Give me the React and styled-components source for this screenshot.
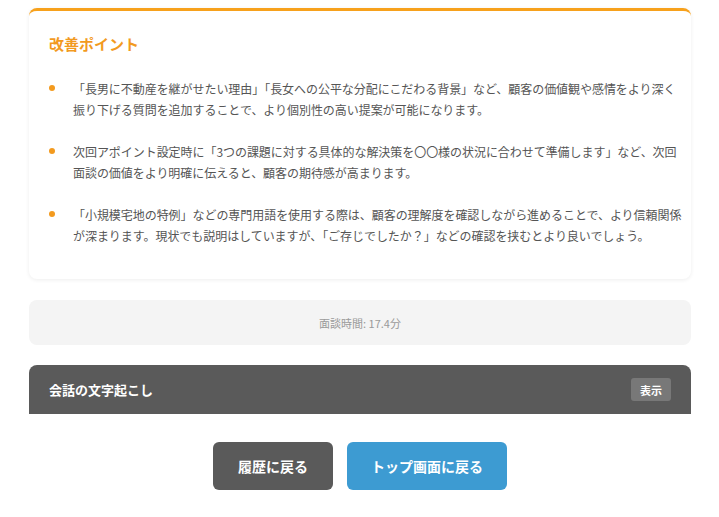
import React from 'react';
import styled, { createGlobalStyle } from 'styled-components';

const GlobalStyle = createGlobalStyle`
  html, body {
    margin: 0;
    padding: 0;
    background: #ffffff;
  }
  body {
    font-family: "Noto Sans CJK JP", "Noto Sans", sans-serif;
  }
`;

const Page = styled.div`
  padding: 8px 28px 28px 29px;
  display: flex;
  flex-direction: column;
`;

const Card = styled.section`
  background: #fff;
  border-top: 3px solid #f7a11c;
  border-radius: 8px;
  box-shadow: 0 1px 4px rgba(0, 0, 0, 0.07);
  padding: 22px 14px 33px 20px;
`;

const CardTitle = styled.h2`
  margin: 0;
  font-size: 15px;
  line-height: 22px;
  font-weight: 700;
  color: #f29a1f;
`;

const PointList = styled.ul`
  list-style: none;
  margin: 23px 0 0;
  padding: 0;
  display: flex;
  flex-direction: column;
  gap: 21px;
`;

const Point = styled.li`
  position: relative;
  padding-left: 24px;
  font-size: 12px;
  line-height: 21px;
  color: #555;
  white-space: nowrap;
  letter-spacing: -0.05px;

  &::before {
    content: '';
    position: absolute;
    left: 0;
    top: 7px;
    width: 6px;
    height: 6px;
    border-radius: 50%;
    background: #f39a1e;
  }
`;

const Line = styled.span`
  display: block;
`;

const TimeBox = styled.div`
  margin-top: 21px;
  height: 45px;
  display: flex;
  align-items: center;
  justify-content: center;
  background: #f4f4f4;
  border-radius: 8px;
  font-size: 11px;
  color: #9a9a9a;
`;

const TranscriptHeader = styled.div`
  margin-top: 20px;
  height: 49px;
  display: flex;
  align-items: center;
  justify-content: space-between;
  padding: 0 20px;
  background: #5a5a5a;
  border-radius: 8px 8px 0 0;
`;

const TranscriptTitle = styled.h3`
  margin: 0;
  font-size: 13px;
  font-weight: 700;
  color: #fff;
`;

const ToggleButton = styled.button`
  width: 40px;
  height: 23px;
  border: none;
  border-radius: 3px;
  background: #787878;
  color: #fff;
  font-family: inherit;
  font-size: 11px;
  font-weight: 700;
  padding: 0;
`;

const Actions = styled.div`
  margin-top: 28px;
  display: flex;
  justify-content: center;
  gap: 14px;
`;

const ActionButton = styled.button`
  width: ${props => props.width}px;
  height: 48px;
  border: none;
  border-radius: 6px;
  background: ${props => (props.primary ? '#3d9bd2' : '#5a5a5a')};
  color: #fff;
  font-family: inherit;
  font-size: 14px;
  font-weight: 700;
`;

const points = [
  [
    '「長男に不動産を継がせたい理由」「長女への公平な分配にこだわる背景」など、顧客の価値観や感情をより深く',
    '振り下げる質問を追加することで、より個別性の高い提案が可能になります。',
  ],
  [
    '次回アポイント設定時に「3つの課題に対する具体的な解決策を〇〇様の状況に合わせて準備します」など、次回',
    '面談の価値をより明確に伝えると、顧客の期待感が高まります。',
  ],
  [
    '「小規模宅地の特例」などの専門用語を使用する際は、顧客の理解度を確認しながら進めることで、より信頼関係',
    'が深まります。現状でも説明はしていますが、「ご存じでしたか？」などの確認を挟むとより良いでしょう。',
  ],
];

export default function App() {
  return (
    <>
      <GlobalStyle />
      <Page>
        <Card>
          <CardTitle>改善ポイント</CardTitle>
          <PointList>
            {points.map((lines, i) => (
              <Point key={i}>
                {lines.map((text, j) => (
                  <Line key={j}>{text}</Line>
                ))}
              </Point>
            ))}
          </PointList>
        </Card>

        <TimeBox>面談時間: 17.4分</TimeBox>

        <TranscriptHeader>
          <TranscriptTitle>会話の文字起こし</TranscriptTitle>
          <ToggleButton>表示</ToggleButton>
        </TranscriptHeader>

        <Actions>
          <ActionButton width={120}>履歴に戻る</ActionButton>
          <ActionButton width={160} primary>トップ画面に戻る</ActionButton>
        </Actions>
      </Page>
    </>
  );
}
